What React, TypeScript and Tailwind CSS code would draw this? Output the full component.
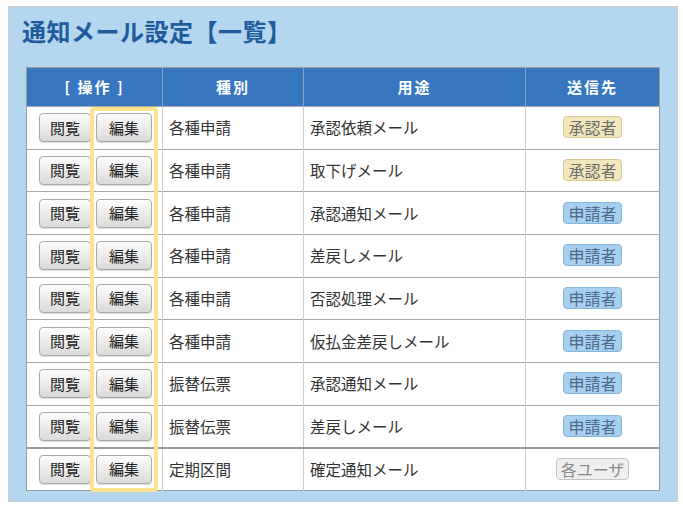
const rows = [
  { kind: '各種申請', use: '承認依頼メール', to: '承認者' },
  { kind: '各種申請', use: '取下げメール', to: '承認者' },
  { kind: '各種申請', use: '承認通知メール', to: '申請者' },
  { kind: '各種申請', use: '差戻しメール', to: '申請者' },
  { kind: '各種申請', use: '否認処理メール', to: '申請者' },
  { kind: '各種申請', use: '仮払金差戻しメール', to: '申請者' },
  { kind: '振替伝票', use: '承認通知メール', to: '申請者' },
  { kind: '振替伝票', use: '差戻しメール', to: '申請者' },
  { kind: '定期区間', use: '確定通知メール', to: '各ユーザ' },
];

const badgeClass: Record<string, string> = {
  承認者: 'bg-[#f2e6bd] border-[#d8c98f] text-[#6b6b6b]',
  申請者: 'bg-[#a7cff0] border-[#86b6df] text-[#4d6a8a]',
  各ユーザ: 'bg-[#efefef] border-[#c4c4c4] text-[#8a8a8a]',
};

const Btn = ({ label, w }: { label: string; w: string }) => (
  <button
    className={`${w} h-[29px] rounded-[4px] border border-[#a9a9a9] bg-gradient-to-b from-[#fdfdfd] to-[#dadada] text-[15px] text-[#222] shadow-[0_1px_1px_rgba(0,0,0,0.15)]`}
  >
    {label}
  </button>
);

export default function App() {
  return (
    <div
      className="min-h-[509px] w-[683px] bg-white pl-[8px] pt-[6px]"
      style={{ fontFamily: '"Noto Sans CJK JP", "Noto Sans", sans-serif' }}
    >
      <div className="h-[496px] w-[670px] border border-[#cdcdcd] bg-[#b5d6ef] pl-[17px] pt-[8px]">
        <h1 className="-ml-[4px] mb-[20px] h-[32px] text-[24px] font-bold leading-[32px] tracking-[0.5px] text-[#1e5c9e]">
          通知メール設定【一覧】
        </h1>
        <div className="relative w-[633px]">
          <table className="w-[633px] table-fixed border-collapse border border-[#9a9a9a] bg-white text-[15.5px] text-[#333]">
            <colgroup>
              <col className="w-[136px]" />
              <col className="w-[141px]" />
              <col className="w-[222px]" />
              <col className="w-[134px]" />
            </colgroup>
            <thead>
              <tr className="h-[39px] bg-[#3677bf] text-[15px] font-bold tracking-[2px] text-white">
                <th className="border-r border-[#8da6c4]">[ 操作 ]</th>
                <th className="border-r border-[#8da6c4]">種別</th>
                <th className="border-r border-[#8da6c4]">用途</th>
                <th>送信先</th>
              </tr>
            </thead>
            <tbody>
              {rows.map((r, i) => (
                <tr
                  key={i}
                  className={`h-[42.7px] ${i === rows.length - 1 ? 'border-t-2 border-t-[#9a9a9a]' : 'border-t border-t-[#a8a8a8]'}`}
                >
                  <td className="border-r border-[#cfcfcf] pl-[12px]">
                    <div className="flex gap-[5px]">
                      <Btn label="閲覧" w="w-[52px]" />
                      <Btn label="編集" w="w-[56px]" />
                    </div>
                  </td>
                  <td className="border-r border-[#cfcfcf] pl-[6px]">{r.kind}</td>
                  <td className="border-r border-[#cfcfcf] pl-[6px]">{r.use}</td>
                  <td className="text-center">
                    <span
                      className={`inline-block h-[22px] rounded-[4px] border px-[4px] text-[16px] leading-[20px] ${badgeClass[r.to]}`}
                    >
                      {r.to}
                    </span>
                  </td>
                </tr>
              ))}
            </tbody>
          </table>
          <div className="pointer-events-none absolute left-[64px] top-[40px] h-[385px] w-[68px] rounded-[4px] border-[4px] border-[#fbe48f]" />
        </div>
      </div>
    </div>
  );
}
